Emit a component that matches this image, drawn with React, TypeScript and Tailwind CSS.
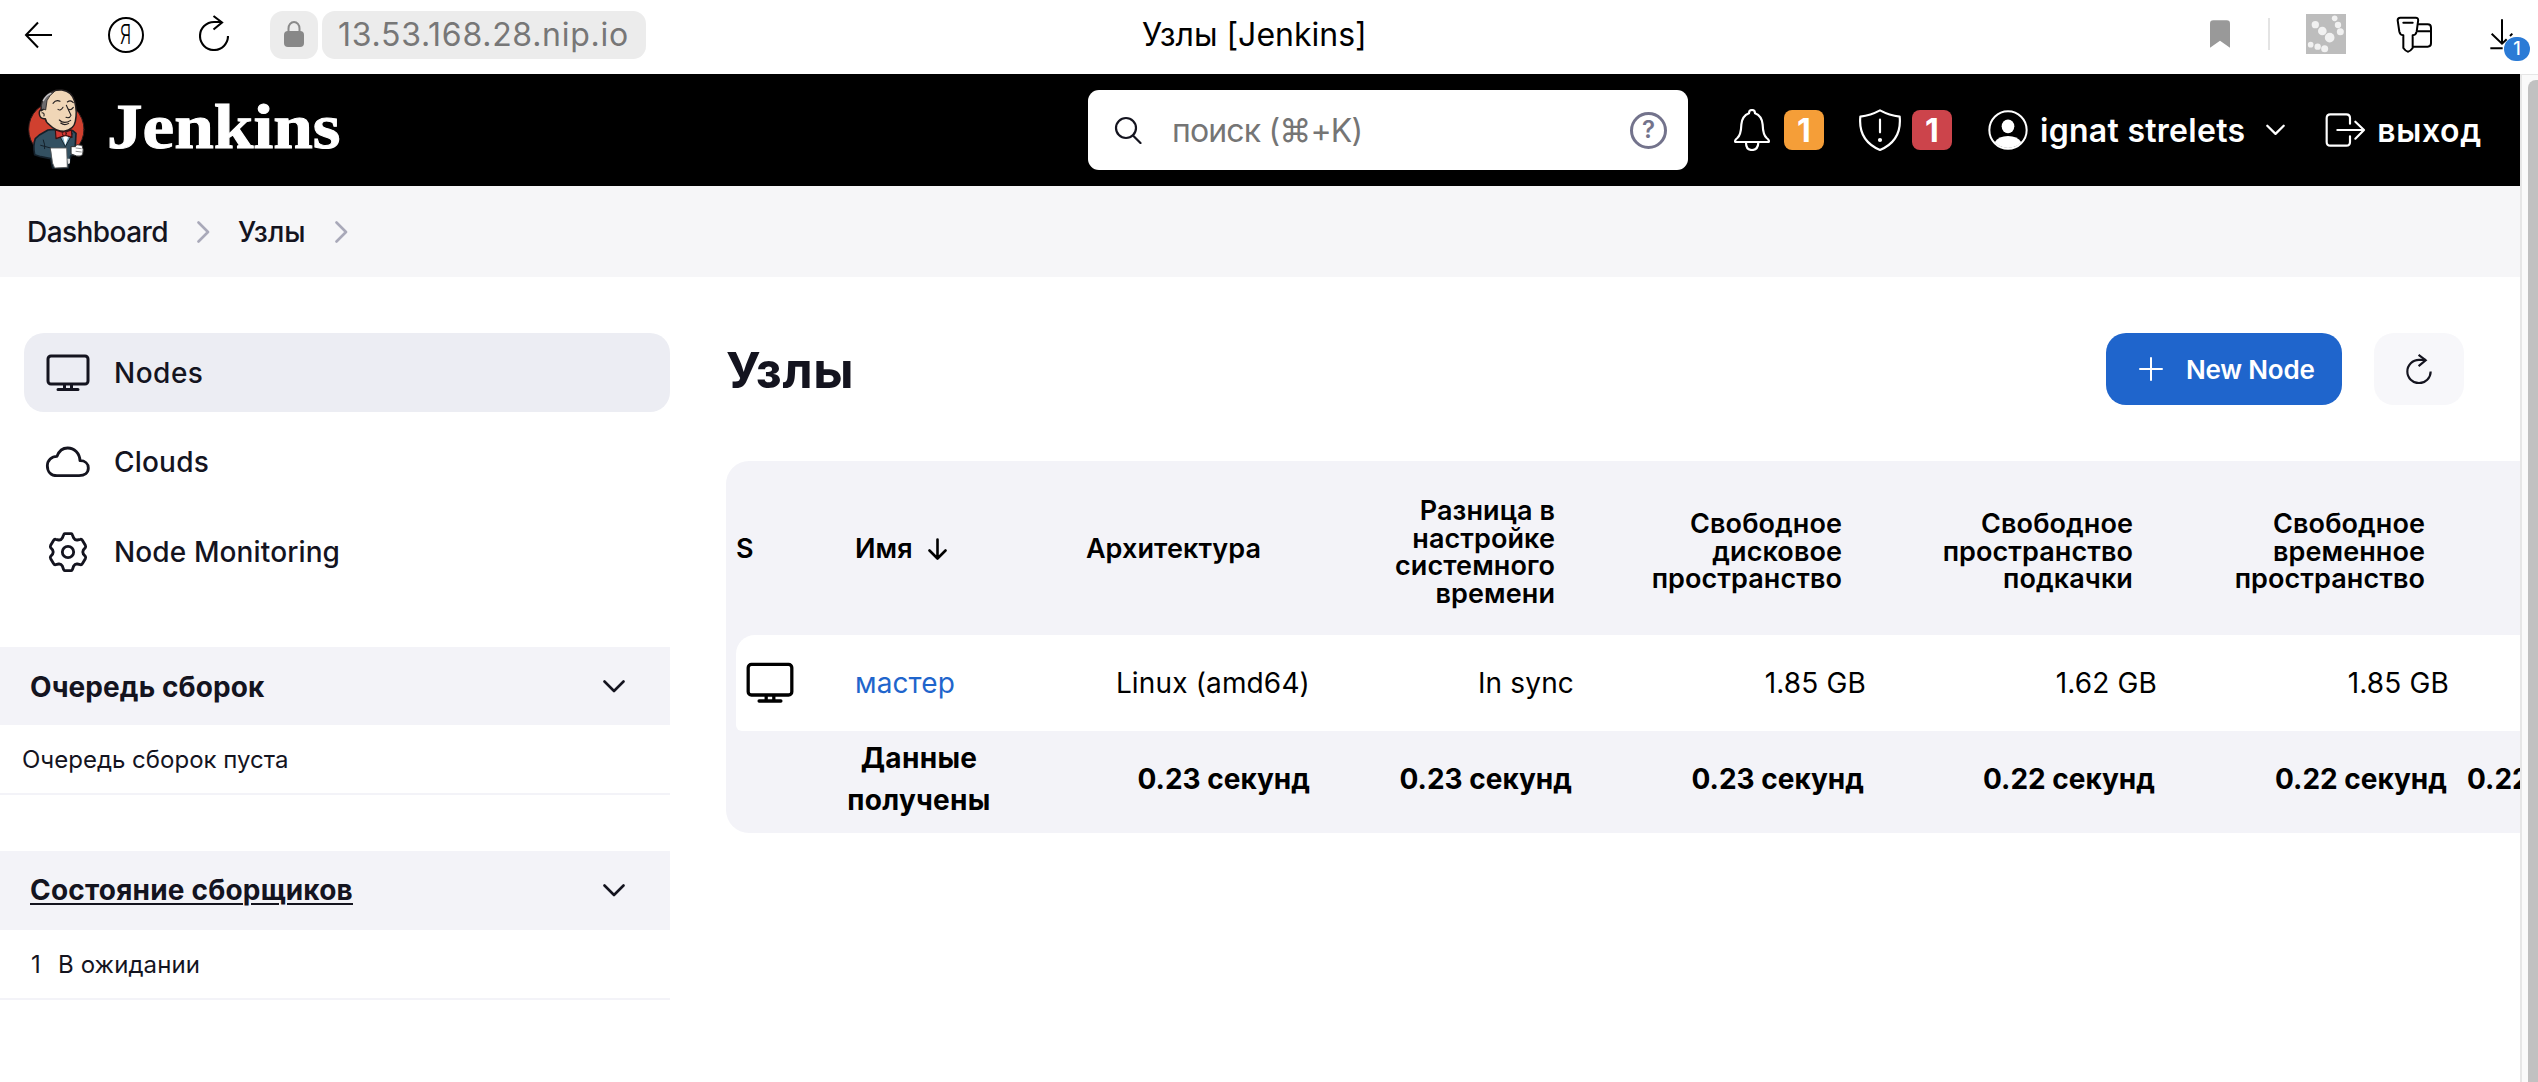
import React from 'react';

const stroke = {
  fill: 'none',
  stroke: 'currentColor',
  strokeLinecap: 'round' as const,
  strokeLinejoin: 'round' as const,
};

function Reload({ className, width }: { className: string; width: number }) {
  return (
    <svg className={className} viewBox="0 0 30 36" {...stroke} strokeWidth={width} strokeLinecap="butt" strokeLinejoin="miter">
      <path d="M29 21A14 14 0 1 1 15 7H23" />
      <path d="M14.5 1L23 7.5L14.5 14.5" />
    </svg>
  );
}

function Monitor({ className }: { className: string }) {
  return (
    <svg className={className} viewBox="0 0 44 38" {...stroke} strokeWidth={3}>
      <rect x="2" y="2" width="40" height="28" rx="3" />
      <path d="M18.5 31V35M25.5 31V35M12 35.5H32" />
    </svg>
  );
}

function ChevronDown({ className }: { className: string }) {
  return (
    <svg className={className} viewBox="0 0 22 13" {...stroke} strokeWidth={2.6}>
      <path d="M1.5 1.5L11 11L20.5 1.5" />
    </svg>
  );
}

function Butler() {
  return (
    <svg className="h-[100px] w-[80px] shrink-0" viewBox="0 0 240 300" strokeLinejoin="round" strokeLinecap="round">
      <ellipse cx="109" cy="148" rx="83" ry="84" fill="#d0402f" stroke="#2a1a1a" strokeWidth="3" />
      <path d="M58 165L84 150L104 148L158 152L168 160L166 196L168 222L152 228L144 264L98 264L92 236L62 230L44 224Q38 196 46 176Z" fill="#335061" stroke="#14202a" strokeWidth="5" />
      <path d="M114 158L136 200L158 160L146 150H122Z" fill="#81b0c4" stroke="#14202a" strokeWidth="3" />
      <path d="M128 166L136 196L146 166Z" fill="#fff" />
      <path d="M64 92Q60 64 80 46Q98 28 126 30Q156 34 164 64Q172 96 166 124Q162 148 132 154Q108 154 88 134Q78 128 76 116Q60 118 58 102Q56 88 70 88Z" fill="#f0d6b7" stroke="#231f20" strokeWidth="4.5" />
      <path d="M64 88Q61 62 84 43Q94 36 104 34Q86 48 81 62Q79 76 77 90L72 88Z" fill="#6d6b6d" stroke="#231f20" strokeWidth="2.500" />
      <path d="M70 62Q78 46 92 40" fill="none" stroke="#c9c7c9" strokeWidth="4" />
      <path d="M99 70Q108 58 120 64M142 66Q152 58 160 68M114 88Q122 94 129 82M146 88Q153 92 160 82M139 76Q147 94 153 106Q149 116 138 112M118 120Q132 134 152 121M122 129Q134 138 146 130M66 98Q74 98 72 108" fill="none" stroke="#231f20" strokeWidth="3.2" />
      <path d="M106 150L132 158L154 150L156 172L136 166L108 176Z" fill="#d33833" stroke="#3a1010" strokeWidth="3.5" />
      <circle cx="133" cy="161" r="6" fill="#d33833" stroke="#3a1010" strokeWidth="2.5" />
      <path d="M70 180Q76 196 74 206M62 196L92 204" fill="none" stroke="#14202a" strokeWidth="3" />
      <path d="M92 204L140 204L142 262L104 264L98 250Z" fill="#fff" stroke="#555" strokeWidth="2.5" />
      <path d="M142 236L150 236L150 250L144 252Z" fill="#ddd" />
      <path d="M154 200L166 200L170 194L186 196Q192 208 188 224Q182 230 170 228L154 222Z" fill="#fff" stroke="#333" strokeWidth="3" />
      <path d="M168 204L184 206M168 214L184 216" fill="none" stroke="#777" strokeWidth="2.5" />
    </svg>
  );
}

function BrowserBar() {
  return (
    <div className="flex h-[74px] w-full shrink-0 items-start bg-white">
      <div className="flex h-[69px] w-[1142px] items-center pl-[24px] text-black">
        <svg className="h-[28px] w-[28px]" viewBox="0 0 28 28" {...stroke} strokeWidth={2} strokeLinecap="butt" strokeLinejoin="miter">
          <path d="M28 14H2M14 1.5L2 14L14 26.5" />
        </svg>
        <span className="ml-[56px] flex h-[36px] w-[36px] items-center justify-center rounded-full border-2 border-black">
          <span className="inline-block scale-x-[0.66] text-[27px] leading-none font-light">Я</span>
        </span>
        <Reload className="-mt-[4px] ml-[55px] h-[36px] w-[30px]" width={2.1} />
        <span className="ml-[41px] flex h-[48px] w-[48px] items-center justify-center rounded-[13px] bg-[#ececec]">
          <svg className="-mt-[1px] h-[26px] w-[20px]" viewBox="0 0 20 26">
            <path d="M4.5 12V7.5a5.5 6.5 0 0 1 11 0V12" fill="none" stroke="#8a8a8a" strokeWidth="2" />
            <rect y="10" width="20" height="16" rx="4" fill="#888" />
          </svg>
        </span>
        <span className="ml-[4px] flex h-[48px] w-[324px] items-center rounded-[13px] bg-[#ececec] pt-px pl-[16px] text-[32px] leading-none tracking-[0.72px] text-[#777]">
          13.53.168.28.nip.io
        </span>
      </div>
      <div className="flex h-[70px] items-center text-[32px] leading-none whitespace-nowrap text-black">Узлы [Jenkins]</div>
      <div className="ml-auto flex h-[68px] items-center pr-[8px] text-black">
        <svg className="h-[28px] w-[20px]" viewBox="90 59 60 84">
          <path d="M90 70Q90 60 100 60H140Q150 60 150 70V142L120 121L90 142Z" fill="#999" />
        </svg>
        <span className="ml-[38px] h-[32px] w-[2px] bg-[#e4e4e4]" />
        <svg className="ml-[36px] h-[40px] w-[40px]" viewBox="378 42 120 120">
          <rect x="378" y="42" width="120" height="120" fill="#bdbdbd" />
          <g fill="#f1f1f1">
            <circle cx="406" cy="74" r="11" />
            <circle cx="427" cy="93" r="13" />
            <circle cx="449" cy="113" r="14.5" />
            <circle cx="464" cy="55" r="8.5" />
            <circle cx="474" cy="75" r="9.5" />
            <circle cx="481" cy="95" r="10.5" />
            <circle cx="392" cy="134" r="8.5" />
            <circle cx="413" cy="140" r="9.5" />
            <circle cx="434" cy="146" r="10.5" />
          </g>
        </svg>
        <svg className="ml-[50px] h-[37px] w-[37px]" viewBox="648 46 111 111" {...stroke} strokeWidth={6}>
          <path d="M716 71H743Q753 71 753 81V128Q753 138 743 138H700M714 92H753" />
          <path d="M661 51H707Q715 51 714.500 59L710 93Q708 103 698 104V142Q691 152 684 153Q677 152 670 142V104Q660 103 658 93L653 59Q653 51 661 51Z" />
          <path d="M670 66H698" />
        </svg>
        <span className="relative ml-[57px] h-[32px] w-[40px]">
          <svg className="h-[32px] w-[24px]" viewBox="930 56 72 96" {...stroke} strokeWidth={6} strokeLinecap="butt" strokeLinejoin="miter">
            <path d="M966 60V132M935 103L966 133L980 120M997 103L990 110M931 147H968" />
          </svg>
          <span className="absolute top-[19px] left-[14px] flex h-[24px] w-[26px] items-center justify-center rounded-full bg-[#2b7bd6] text-[18px] leading-none font-medium text-white">
            1
          </span>
        </span>
      </div>
    </div>
  );
}

function Header() {
  return (
    <header className="flex h-[112px] shrink-0 items-center bg-black text-[32px] leading-none font-semibold whitespace-nowrap text-white">
      <div className="flex w-[1088px] items-center pl-[20px]">
        <Butler />
        <span className="-mt-[6px] ml-[7px] inline-block origin-left scale-x-[1.13] font-['Liberation_Serif',serif] text-[63px] font-bold [-webkit-text-stroke:1px_white]">
          Jenkins
        </span>
      </div>
      <div className="flex h-[80px] w-[600px] items-center rounded-[11px] bg-white pr-[21px] pl-[26px]">
        <svg className="h-[28px] w-[28px] text-[#14141f]" viewBox="0 0 28 28" {...stroke} strokeWidth={2.2}>
          <circle cx="12" cy="12" r="10" />
          <path d="M19 19.5L26.500 27" />
        </svg>
        <span className="ml-[30px] pt-[2px] text-[32px] font-normal tracking-[-0.85px] text-[#757575]">поиск (⌘+K)</span>
        <span className="ml-auto flex h-[37px] w-[37px] items-center justify-center rounded-full border-[3px] border-[#73738c] text-[24px] leading-none font-semibold text-[#73738c]">
          ?
        </span>
      </div>
      <svg className="ml-[46px] h-[42px] w-[36px]" viewBox="42 57 108 126" {...stroke} strokeWidth={6.5}>
        <path d="M87 70Q87 60 96 60T105 70Q126 78 128 104Q129 134 140 144Q149 151 146 156H46Q43 151 52 144Q63 134 64 104Q66 78 87 70Z" />
        <path d="M78 158Q78 180 96 180T115 158" />
      </svg>
      <span className="ml-[14px] flex h-[40px] w-[40px] items-center justify-center rounded-[8px] bg-[#f59e38] pt-px font-bold">1</span>
      <svg className="ml-[35px] h-[42px] w-[42px]" viewBox="417 57 126 126" {...stroke} strokeWidth={6.5}>
        <path d="M480 61Q452 76 421 80Q414 152 480 180Q546 152 539 80Q508 76 480 61Z" />
        <path d="M480 89V127" />
        <circle cx="480" cy="150" r="3" />
      </svg>
      <span className="ml-[11px] flex h-[40px] w-[40px] items-center justify-center rounded-[8px] bg-[#cc444b] pt-px font-bold">1</span>
      <svg className="ml-[36px] h-[40px] w-[40px]" viewBox="804 60 120 120">
        <circle cx="864" cy="120" r="56" fill="none" stroke="#fff" strokeWidth="6" />
        <ellipse cx="864" cy="109" rx="19" ry="20.500" fill="#fff" />
        <path d="M824 157Q836 138 864 138T904 157A56 56 0 0 1 824 157Z" fill="#fff" />
      </svg>
      <span className="ml-[12px] pt-[2px] tracking-[0.28px]">ignat strelets</span>
      <ChevronDown className="ml-[21px] h-[12px] w-[19px]" />
      <svg className="ml-[40px] h-[34px] w-[41px]" viewBox="437 339 123 102" {...stroke} strokeWidth={6.5}>
        <path d="M512 371V354Q512 343 501 343H453Q442 343 442 354V426Q442 437 453 437H501Q512 437 512 426V409" />
        <path d="M474 390H552M528 365L554 390L528 416" />
      </svg>
      <span className="ml-[11px] pt-[2px] tracking-[0.6px]">выход</span>
    </header>
  );
}

function CrumbChevron() {
  return (
    <svg className="h-[22px] w-[13px] text-[#a9a9b9]" viewBox="0 0 13 22" {...stroke} strokeWidth={2.6}>
      <path d="M1.500 1.500L11 11L1.500 20.500" />
    </svg>
  );
}

function Cloud() {
  return (
    <svg className="h-[32px] w-[46px]" viewBox="46 319 138 96" {...stroke} strokeWidth={8.5}>
      <path d="M82 408C64 408 53 396 53 378C53 362 66 350 82 350C88 334 98 325 114 325C134 325 150 341 151 363C166 363 176 372 176 385C176 399 165 408 148 408Z" />
    </svg>
  );
}

function Gear() {
  return (
    <svg className="h-[42px] w-[42px]" viewBox="51 569 126 126" {...stroke} strokeWidth={8.5}>
      <path d="M104 577H124Q126 577 127 580L131 590Q135 597 142 596L151 594Q155 593 157 597L166 612Q168 616 166 619L160 626Q157 632 160 638L166 645Q168 648 166 652L157 667Q155 671 151 670L142 668Q135 667 131 674L127 685Q126 688 124 688H104Q102 688 101 685L97 674Q93 667 86 668L77 670Q73 671 71 667L62 652Q60 648 62 645L68 638Q71 632 68 626L62 619Q60 616 62 612L71 597Q73 593 77 594L86 596Q93 597 97 590L101 580Q102 577 104 577Z" />
      <circle cx="114" cy="632" r="17" />
    </svg>
  );
}

const tasks = [
  { label: 'Nodes', icon: <Monitor className="h-[38px] w-[44px]" />, active: true, tracking: 'tracking-[0.5px]' },
  { label: 'Clouds', icon: <Cloud />, active: false, tracking: 'tracking-[0.2px]' },
  { label: 'Node Monitoring', icon: <Gear />, active: false, tracking: 'tracking-[0.12px]' },
];

function Sidebar() {
  return (
    <aside className="flex w-[670px] shrink-0 flex-col pt-[56px]">
      <nav className="flex flex-col gap-[10.5px] pl-[24px] text-[28px] font-medium">
        {tasks.map((t) => (
          <a key={t.label} className={`flex h-[79px] items-center rounded-[20px] pl-[21px] ${t.active ? 'bg-[#ecedf3]' : ''} ${t.tracking}`}>
            <span className="flex w-[46px] justify-center">{t.icon}</span>
            <span className="ml-[23px] leading-none">{t.label}</span>
          </a>
        ))}
      </nav>
      <section className="mt-[56px]">
        <div className="flex h-[78px] items-center justify-between bg-[#f3f3f8] pr-[45px] pl-[30px] text-[28px] font-bold tracking-[0.09px]">
          <span className="pt-px">Очередь сборок</span>
          <ChevronDown className="h-[13px] w-[22px]" />
        </div>
        <div className="flex h-[70px] items-center border-b-2 border-[#f3f3f8] pt-px pl-[22px] text-[24px]">Очередь сборок пуста</div>
      </section>
      <section className="mt-[56px]">
        <div className="flex h-[79px] items-center justify-between bg-[#f3f3f8] pr-[45px] pl-[30px] text-[28px] font-bold tracking-[0.2px]">
          <span className="-mt-px underline decoration-2 underline-offset-[3px]">Состояние сборщиков</span>
          <ChevronDown className="h-[13px] w-[22px]" />
        </div>
        <div className="flex h-[70px] items-center border-b-2 border-[#f3f3f8] pt-px pl-[31px] text-[24px]">
          <span className="w-[27px]">1</span>
          <span className="tracking-[0.1px]">В ожидании</span>
        </div>
      </section>
    </aside>
  );
}

const cols = 'grid grid-cols-[110px_146px_327px_264px_292px_291px_292px_200px]';

const heads = [
  { lines: ['Архитектура'], pad: 'pt-[2px] pr-[58px]' },
  { lines: ['Разница в', 'настройке', 'системного', 'времени'], pad: 'pt-[8px] pr-[28px]' },
  { lines: ['Свободное', 'дисковое', 'пространство'], pad: 'pt-[7px] pr-[33px]' },
  { lines: ['Свободное', 'пространство', 'подкачки'], pad: 'pt-[7px] pr-[33px]' },
  { lines: ['Свободное', 'временное', 'пространство'], pad: 'pt-[7px] pr-[33px]' },
];
const values = ['Linux (amd64)', 'In sync', '1.85 GB', '1.62 GB', '1.85 GB'];
const timings = ['0.23 секунд', '0.23 секунд', '0.23 секунд', '0.22 секунд', '0.22 секунд'];

function NodesTable() {
  return (
    <div className="mt-[56px] w-[1932px] rounded-[23px] bg-[#f3f3f8] pb-[6px] pl-[10px] whitespace-nowrap text-black">
      <div className={`${cols} h-[174px] items-center text-[27px] leading-[27.5px] font-semibold tracking-[0.08px]`}>
        <span className="pt-[2px]">S</span>
        <span className="flex items-center pt-[2px] pl-[9px]">
          Имя
          <svg className="ml-[15px] h-[22px] w-[19px]" viewBox="0 0 19 22" {...stroke} strokeWidth={2.6}>
            <path d="M9.500 1.500V20M1.500 12.500L9.500 20.500L17.500 12.500" />
          </svg>
        </span>
        {heads.map((h, i) => (
          <span key={i} className={`flex flex-col items-end ${h.pad}`}>
            {h.lines.map((l) => (
              <span key={l}>{l}</span>
            ))}
          </span>
        ))}
      </div>
      <div className={`${cols} h-[95.500px] items-center rounded-tl-[19px] rounded-bl-[6px] bg-white text-[28px] leading-none`}>
        <Monitor className="ml-[10px] h-[42px] w-[48px]" />
        <a className="pl-[9px] tracking-[0.1px] text-[#1f65cc]">мастер</a>
        {values.map((v, i) => (
          <span key={i} className="pr-[9px] text-right tracking-[0.15px]">
            {v}
          </span>
        ))}
      </div>
      <div className={`${cols} h-[96.500px] items-center text-[28px] leading-[42px] font-bold`}>
        <span />
        <span className="text-center tracking-[0.3px]">
          Данные
          <br />
          получены
        </span>
        {timings.map((v, i) => (
          <span key={i} className={i === 0 ? 'pr-[9px] text-right' : 'pr-[11px] text-right'}>
            {v}
          </span>
        ))}
        <span className="pl-[9px]">0.22 секунд</span>
      </div>
    </div>
  );
}

export default function App() {
  return (
    <div className="flex h-[1082px] w-[2538px] flex-col overflow-hidden bg-white font-['Inter',sans-serif] text-[#14141f]">
      <BrowserBar />
      <div className="flex min-h-0 flex-1">
        <div className="flex w-[2520px] flex-col overflow-hidden">
          <Header />
          <nav className="flex h-[91px] shrink-0 items-center bg-[#f6f6f8] pl-[27px] text-[28px] leading-none font-medium">
            <span className="tracking-[-0.55px]">Dashboard</span>
            <span className="ml-[29px] flex">
              <CrumbChevron />
            </span>
            <span className="ml-[28px]">Узлы</span>
            <span className="ml-[29px] flex">
              <CrumbChevron />
            </span>
          </nav>
          <div className="flex">
            <Sidebar />
            <main className="ml-[56px] w-[1794px] pt-[56px]">
              <div className="flex h-[72px] items-center pr-[56px]">
                <h1 className="pt-[2px] text-[50px] leading-none font-bold tracking-[0.6px]">Узлы</h1>
                <button className="ml-auto flex h-[72px] w-[236px] items-center rounded-[20px] bg-[#1f65cc] pl-[33px] text-[26px] leading-none font-semibold tracking-[-0.2px] text-white">
                  <svg className="h-[24px] w-[24px]" viewBox="0 0 24 24" {...stroke} strokeWidth={2}>
                    <path d="M12 1V23M1 12H23" />
                  </svg>
                  <span className="ml-[23px] pt-[2px]">New Node</span>
                </button>
                <button className="ml-[32px] flex h-[72px] w-[90px] items-center justify-center rounded-[20px] bg-[#f7f7fa]">
                  <Reload className="h-[30px] w-[26px]" width={2.6} />
                </button>
              </div>
              <NodesTable />
            </main>
          </div>
        </div>
        <div className="flex w-[18px] flex-col border-t border-l-2 border-[#e6e6e6] bg-[#fafafa] pt-[5px] pl-[6px]">
          <div className="flex-1 rounded-tl-[8px] bg-[#c1c1c1]" />
        </div>
      </div>
    </div>
  );
}
